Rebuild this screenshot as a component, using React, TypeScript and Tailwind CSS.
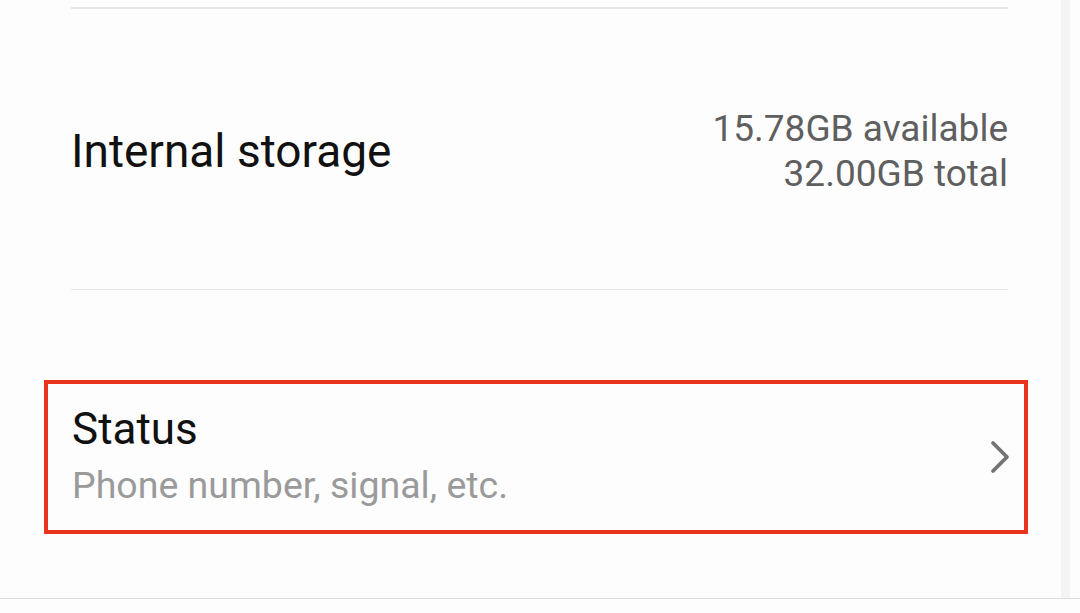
import React from 'react';

function Chevron() {
  return (
    <svg width="20" height="34" viewBox="0 0 20 34" fill="none">
      <polyline points="3,3 17,17 3,31" stroke="#737373" strokeWidth="3.75" strokeLinecap="round" strokeLinejoin="round" />
    </svg>
  );
}

export default function App() {
  return (
    <div className="w-[1080px] h-[613px] bg-[#fdfdfd] flex flex-col overflow-hidden font-['Roboto',sans-serif]">
      <div className="flex flex-1">
        <div className="flex-1 flex flex-col">
          <div className="h-[7px]" />
          <div className="ml-[71px] mr-[53px] border-t-2 border-[#e6e6e6] h-[282px] flex items-center justify-between">
            <span className="text-[46px] leading-none text-[#111] mt-[3px]">Internal storage</span>
            <div className="flex flex-col items-end text-[37px] leading-[45px] text-[#5f5f5f] mt-[4px]">
              <span>15.78GB available</span>
              <span>32.00GB total</span>
            </div>
          </div>
          <div className="ml-[71px] mr-[53px] border-t border-[#e6e6e6]" />
          <div className="h-[90px]" />
          <div className="ml-[44px] w-[984px] h-[154px] border-4 border-[#e8341c] flex items-center justify-between pl-[24px] pr-[14px]">
            <div className="flex flex-col mt-[4px]">
              <span className="text-[44px] leading-[52px] text-[#111]">Status</span>
              <span className="text-[37.5px] leading-[60px] text-[#9a9a9a]">Phone number, signal, etc.</span>
            </div>
            <Chevron />
          </div>
        </div>
        <div className="w-[9px] bg-[#f4f4f4]" />
        <div className="w-[10px]" />
      </div>
      <div className="h-[15px] border-t border-[#dcdcdc]" />
    </div>
  );
}
